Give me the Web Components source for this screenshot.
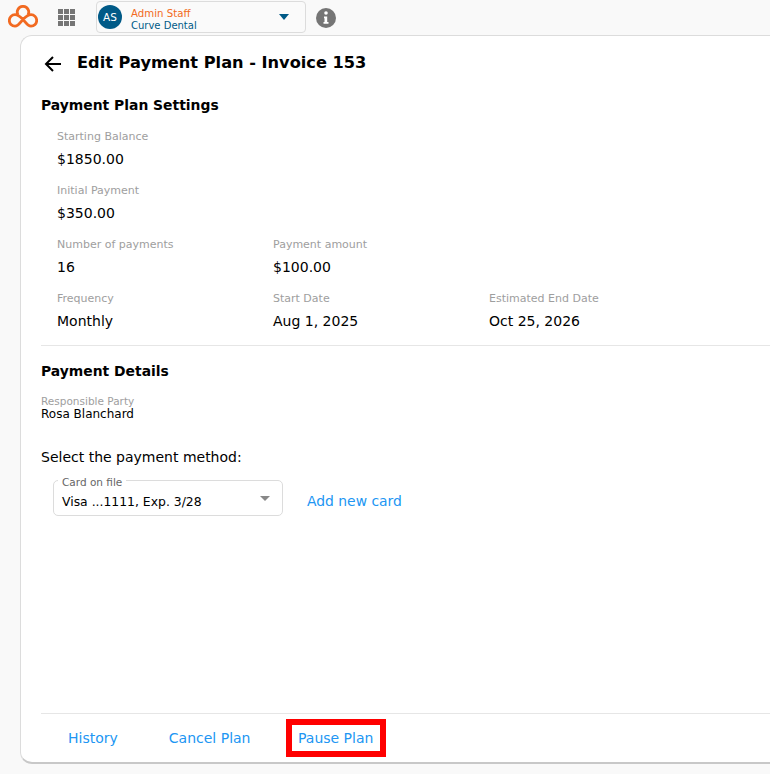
<!DOCTYPE html>
<html>
<head>
<meta charset="utf-8">
<style>
    html, body { margin: 0; padding: 0; height: 100%; overflow: hidden; background: #f9f9f9; }
    body { font-family: "DejaVu Sans", Verdana, sans-serif; color: #000; }
</style>
</head>
<body>
<app-shell>
    <top-bar slot="top"></top-bar>
    <plan-settings></plan-settings>
    <payment-details></payment-details>
    <plan-actions slot="footer"></plan-actions>
</app-shell>
<script>
class AppShell extends HTMLElement {
    constructor() {
        super();
        this.attachShadow({mode: 'open'});
        this.shadowRoot.innerHTML = `
            <style>
                :host { display: flex; flex-direction: column; width: 770px; height: 774px; }
                .card {
                    width: 760px; height: 729px; margin-left: 20px; box-sizing: border-box;
                    background: #fff; border: 1px solid #dcdcdc; border-right: 0;
                    border-bottom: 2px solid #c8c8c8;
                    border-radius: 12px 0 0 12px;
                    display: flex; flex-direction: column;
                    padding-left: 20px;
                }
                .head { display: flex; align-items: center; height: 54px; }
                .head svg { margin-left: 3px; margin-right: 15px; flex: none; }
                h1 { font-size: 16.2px; font-weight: 700; margin: 0; line-height: 54px; white-space: nowrap; }
                main { flex: 1; }
            </style>
            <slot name="top"></slot>
            <div class="card">
                <div class="head">
                    <svg width="18" height="18" viewBox="0 0 18 18" fill="none" stroke="#000" stroke-width="2"><path d="M17 10H2M9 3 2 10l7 7"/></svg>
                    <h1>Edit Payment Plan - Invoice 153</h1>
                </div>
                <main><slot></slot></main>
                <slot name="footer"></slot>
            </div>
        `;
    }
}

class TopBar extends HTMLElement {
    constructor() {
        super();
        this.attachShadow({mode: 'open'});
        this.shadowRoot.innerHTML = `
            <style>
                :host { display: flex; align-items: flex-start; height: 35px; flex: none; }
                .logo { margin: 5px 0 0 8px; flex: none; }
                .apps { margin: 9px 0 0 20px; display: grid; grid-template-columns: repeat(3, 5px); gap: 1px; }
                .apps i { width: 5px; height: 5px; background: #757575; display: block; }
                .account {
                    margin: 1px 0 0 21px; width: 210px; height: 32px; box-sizing: border-box;
                    border: 1px solid #dcdcdc; border-radius: 4px; background: #fafafa;
                    display: flex; align-items: center; padding-left: 1px;
                }
                .avatar {
                    width: 24px; height: 24px; border-radius: 50%; background: #005a87; color: #fff;
                    font-size: 10.5px; display: flex; align-items: center; justify-content: center; flex: none;
                }
                .who { margin-left: 9px; padding-top: 5px; font-size: 10px; line-height: 12px; flex: 1; white-space: nowrap; }
                .who b { display: block; font-weight: 400; color: #f26a21; font-size: 10.2px; }
                .who span { display: block; color: #005a87; }
                .caret { width: 0; height: 0; border: 5px solid transparent; border-top: 6px solid #005a87; border-bottom: 0; margin-right: 16px; }
                .info { margin: 8px 0 0 10px; flex: none; }
            </style>
            <svg class="logo" width="30" height="23" viewBox="0 0 30 23" fill="none" stroke="#f26a21" stroke-width="2.800">
                <path d="M15 14.500C17 12.500 19.500 9.700 23 9.700A5.700 5.700 0 0 1 23 21.100C19.500 21.100 17 16.500 15 14.500C13 12.500 10.500 9.700 7 9.700A5.700 5.700 0 0 0 7 21.100C10.500 21.100 13 16.500 15 14.500Z"/>
                <path d="M10 9.900A5.730 5.730 0 1 1 20 9.900"/>
            </svg>
            <div class="apps"><i></i><i></i><i></i><i></i><i></i><i></i><i></i><i></i><i></i></div>
            <div class="account">
                <div class="avatar">AS</div>
                <div class="who"><b>Admin Staff</b><span>Curve Dental</span></div>
                <div class="caret"></div>
            </div>
            <svg class="info" width="20" height="20" viewBox="0 0 20 20"><circle cx="10" cy="10" r="10" fill="#757575"/><circle cx="10" cy="5" r="1.800" fill="#fff"/><path d="M8 8.500h3.200V14H12.500v1.800h-5V14h1V10.200H8z" fill="#fff"/></svg>
        `;
    }
}

class FieldValue extends HTMLElement {
    constructor() {
        super();
        this.attachShadow({mode: 'open'});
        this.shadowRoot.innerHTML = `
            <style>
                :host { display: block; height: 54px; box-sizing: border-box; white-space: nowrap; padding-top: 1px; }
                .label { font-size: 11px; line-height: 14px; color: #9e9e9e; }
                .value { font-size: 14px; line-height: 18px; margin-top: 6px; }
            </style>
            <div class="label"><slot name="label"></slot></div>
            <div class="value"><slot></slot></div>
        `;
    }
}

class PlanSettings extends HTMLElement {
    constructor() {
        super();
        this.attachShadow({mode: 'open'});
        this.shadowRoot.innerHTML = `
            <style>
                :host { display: block; }
                h2 { font-size: 13.9px; font-weight: 700; margin: 6px 0 0; line-height: 18px; white-space: nowrap; }
                .grid {
                    display: grid; grid-template-columns: repeat(3, 216px);
                    margin: 15px 0 0 16px;
                }
                hr { border: 0; border-top: 1px solid #e6e6e6; margin: 0; }
            </style>
            <h2>Payment Plan Settings</h2>
            <div class="grid">
                <field-value style="grid-column:1/4"><span slot="label">Starting Balance</span>$1850.00</field-value>
                <field-value style="grid-column:1/4"><span slot="label">Initial Payment</span>$350.00</field-value>
                <field-value><span slot="label">Number of payments</span>16</field-value>
                <field-value style="grid-column:2/4"><span slot="label">Payment amount</span>$100.00</field-value>
                <field-value><span slot="label">Frequency</span>Monthly</field-value>
                <field-value><span slot="label">Start Date</span>Aug 1, 2025</field-value>
                <field-value><span slot="label">Estimated End Date</span>Oct 25, 2026</field-value>
            </div>
            <hr>
        `;
    }
}

class PaymentDetails extends HTMLElement {
    constructor() {
        super();
        this.attachShadow({mode: 'open'});
        this.shadowRoot.innerHTML = `
            <style>
                :host { display: block; }
                h2 { font-size: 13.9px; font-weight: 700; margin: 16px 0 0; line-height: 18px; white-space: nowrap; }
                .small { font-size: 10.5px; line-height: 12px; color: #9e9e9e; margin-top: 15px; }
                .name { font-size: 12px; line-height: 13px; margin-top: 1px; }
                .prompt { font-size: 14px; line-height: 18px; margin-top: 27px; }
                .row { display: flex; align-items: center; margin: 14px 0 0 12px; }
                .select {
                    position: relative; width: 230px; height: 36px; box-sizing: border-box;
                    border: 1px solid #dcdcdc; border-radius: 5px;
                    font-size: 12.4px; padding: 13px 0 0 8px; line-height: 16px;
                }
                .legend {
                    position: absolute; left: 4px; top: -5px; background: #fff; padding: 0 4px;
                    font-size: 10.5px; line-height: 12px; color: #666;
                }
                .arrow { position: absolute; right: 12px; top: 15px; width: 0; height: 0; border: 5px solid transparent; border-top: 5px solid #888; border-bottom: 0; }
                a { color: #2196f3; font-size: 13.9px; margin: 6px 0 0 24px; text-decoration: none; }
            </style>
            <h2>Payment Details</h2>
            <div class="small">Responsible Party</div>
            <div class="name">Rosa Blanchard</div>
            <div class="prompt">Select the payment method:</div>
            <div class="row">
                <div class="select">
                    <span class="legend">Card on file</span>
                    Visa ...1111, Exp. 3/28
                    <span class="arrow"></span>
                </div>
                <a href="#">Add new card</a>
            </div>
        `;
    }
}

class PlanActions extends HTMLElement {
    constructor() {
        super();
        this.attachShadow({mode: 'open'});
        this.shadowRoot.innerHTML = `
            <style>
                :host { display: flex; align-items: center; height: 49px; box-sizing: border-box; flex: none; border-top: 1px solid #e6e6e6; padding-left: 27px; font-size: 14px; }
                a { color: #2196f3; text-decoration: none; white-space: nowrap; }
                .cancel { margin-left: 51px; }
                .pause { position: relative; margin-left: 47.5px; }
                .pause::after {
                    content: ""; position: absolute; left: -11.5px; right: -12.5px; top: -11px; bottom: -11px;
                    border: 6px solid #f00;
                }
            </style>
            <a href="#">History</a>
            <a class="cancel" href="#">Cancel Plan</a>
            <a class="pause" href="#">Pause Plan</a>
        `;
    }
}

customElements.define('app-shell', AppShell);
customElements.define('top-bar', TopBar);
customElements.define('field-value', FieldValue);
customElements.define('plan-settings', PlanSettings);
customElements.define('payment-details', PaymentDetails);
customElements.define('plan-actions', PlanActions);
</script>
</body>
</html>
